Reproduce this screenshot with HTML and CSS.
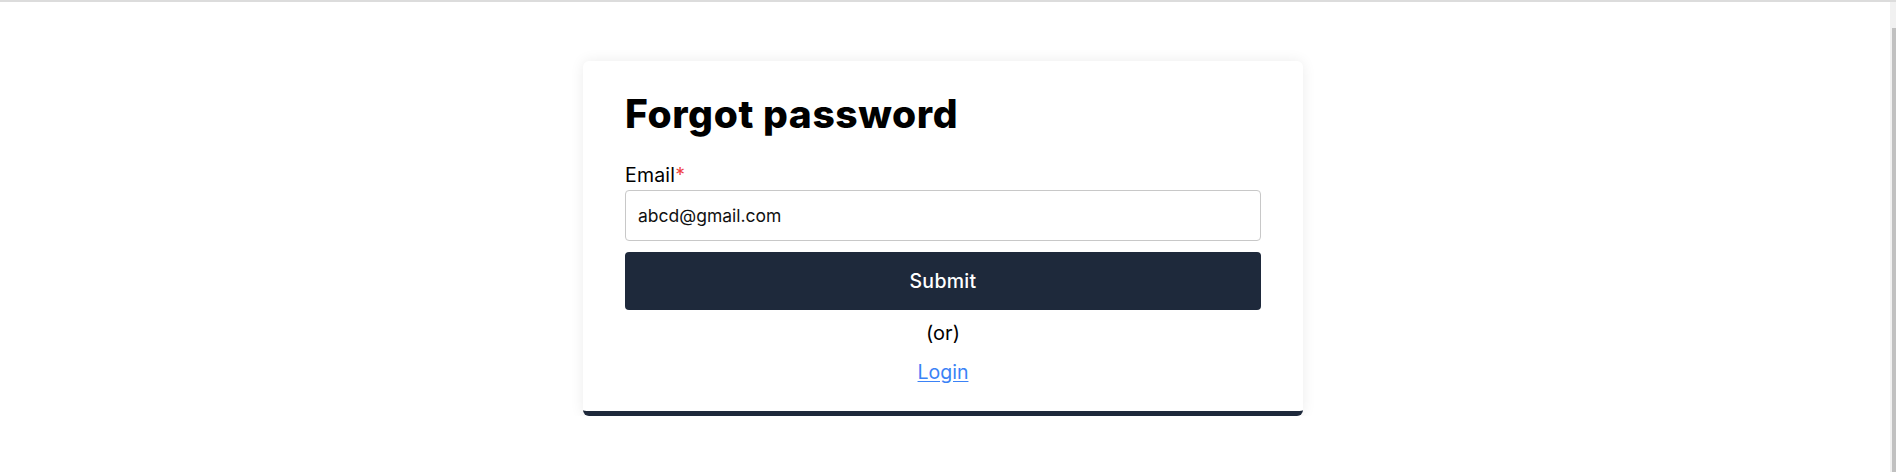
FILE: index.html
```html
<!DOCTYPE html>
<html lang="en">
<head>
<meta charset="utf-8">
<title>Forgot password</title>
<link rel="stylesheet" href="styles.css">
</head>
<body>
<div class="topline"></div>
<main class="page">
  <section class="card">
    <h1 class="title">Forgot password</h1>
    <form class="form">
      <label class="label" for="email">Email<span class="req">*</span></label>
      <input class="input" id="email" type="email" value="abcd@gmail.com">
      <button class="submit" type="button">Submit</button>
    </form>
    <p class="or">(or)</p>
    <p class="login"><a href="#">Login</a></p>
  </section>
</main>
<div class="scrollbar"><div class="thumb"></div></div>
</body>
</html>
```
FILE: styles.css
```css
html, body {
  margin: 0;
  padding: 0;
  background: #ffffff;
  overflow: hidden;
}
body {
  font-family: "Inter", "Noto Sans", sans-serif;
  color: #000;
}
.topline {
  height: 2px;
  background: #dcdcdc;
}
.page {
  display: flex;
  justify-content: center;
  padding-right: 10px;
}
.card {
  margin-top: 59px;
  width: 720px;
  box-sizing: border-box;
  padding: 30px 42px 27px;
  background: #fff;
  border-radius: 6px;
  border-bottom: 5px solid #1e293b;
  box-shadow: 0 0 14px rgba(0, 0, 0, 0.08);
}
.title {
  margin: 0;
  font-size: 39px;
  line-height: 46px;
  font-weight: 800;
  letter-spacing: 0.6px;
}
.form {
  display: flex;
  flex-direction: column;
  margin-top: 26px;
}
.label {
  font-size: 19.5px;
  line-height: 24px;
  letter-spacing: 0.2px;
}
.req {
  color: #ef4444;
}
.input {
  margin-top: 3px;
  height: 51px;
  box-sizing: border-box;
  border: 1px solid #c8c8c8;
  border-radius: 4px;
  padding: 0 12px;
  font-family: inherit;
  font-size: 17.5px;
  color: #111;
  outline: none;
}
.submit {
  margin-top: 11px;
  height: 58px;
  border: none;
  border-radius: 4px;
  background: #1e293b;
  color: #fff;
  font-family: inherit;
  font-size: 19.5px;
  font-weight: 500;
  letter-spacing: 0.3px;
}
.or {
  margin: 11px 0 0;
  text-align: center;
  font-size: 20px;
  line-height: 24px;
}
.login {
  margin: 15px 0 0;
  text-align: center;
  font-size: 19.5px;
  line-height: 24px;
}
.login a {
  color: #3b82f6;
  text-decoration: underline;
  text-underline-offset: 2px;
}
.scrollbar {
  position: fixed;
  top: 2px;
  right: 0;
  width: 6px;
  bottom: 0;
  background: #f1f1f1;
}
.thumb {
  margin-top: 26px;
  margin-left: 2px;
  height: calc(100% - 26px);
  background: #c1c1c1;
}
```
